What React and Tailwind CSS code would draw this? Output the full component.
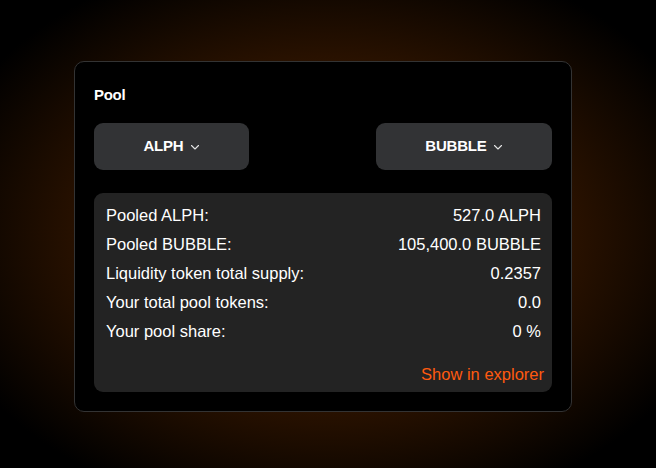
import React from "react";

function Chevron() {
  return (
    <svg width="10" height="10" viewBox="0 0 10 10" fill="none" className="ml-[6px] mt-[1px]">
      <path d="M1.5 3.5 L5 7 L8.5 3.5" stroke="#e5e5e5" strokeWidth="1.1" strokeLinecap="round" strokeLinejoin="round" />
    </svg>
  );
}

const rows = [
  ["Pooled ALPH:", "527.0 ALPH"],
  ["Pooled BUBBLE:", "105,400.0 BUBBLE"],
  ["Liquidity token total supply:", "0.2357"],
  ["Your total pool tokens:", "0.0"],
  ["Your pool share:", "0 %"],
];

export default function App() {
  return (
    <div
      className="w-full h-[468px] flex items-center justify-center bg-[radial-gradient(ellipse_at_center,#2f1500_0%,#2a1200_52%,#000000_88%)]"
      style={{ fontFamily: '"Liberation Sans", Arial, sans-serif' }}
    >
      <div className="w-[498px] h-[351px] mt-[4px] mr-[10px] rounded-[10px] border border-[#333333] bg-black px-[19px] pt-[23px] flex flex-col">
        <div className="text-[15px] leading-5 font-bold text-white tracking-[-0.3px]">Pool</div>
        <div className="mt-[18px] flex justify-between">
          <button className="w-[155px] h-[47px] rounded-[9px] bg-[#323335] flex items-center justify-center text-white font-bold text-[15px] tracking-[-0.2px]">
            ALPH
            <Chevron />
          </button>
          <button className="w-[176px] h-[47px] rounded-[9px] bg-[#323335] flex items-center justify-center text-white font-bold text-[15px] tracking-[-0.2px]">
            BUBBLE
            <Chevron />
          </button>
        </div>
        <div className="mt-[23px] h-[199px] rounded-[9px] bg-[#232323] pl-[12px] pr-[11px] pt-[12px] flex flex-col">
          <div className="flex flex-col gap-[9px]">
            {rows.map(([l, r]) => (
              <div key={l} className="flex justify-between text-[16.5px] leading-5 text-white">
                <span>{l}</span>
                <span>{r}</span>
              </div>
            ))}
          </div>
          <div className="mt-[23px] flex justify-end -mr-[3px]">
            <span className="text-[16.5px] leading-5 text-[#ff5a0f]">Show in explorer</span>
          </div>
        </div>
      </div>
    </div>
  );
}
